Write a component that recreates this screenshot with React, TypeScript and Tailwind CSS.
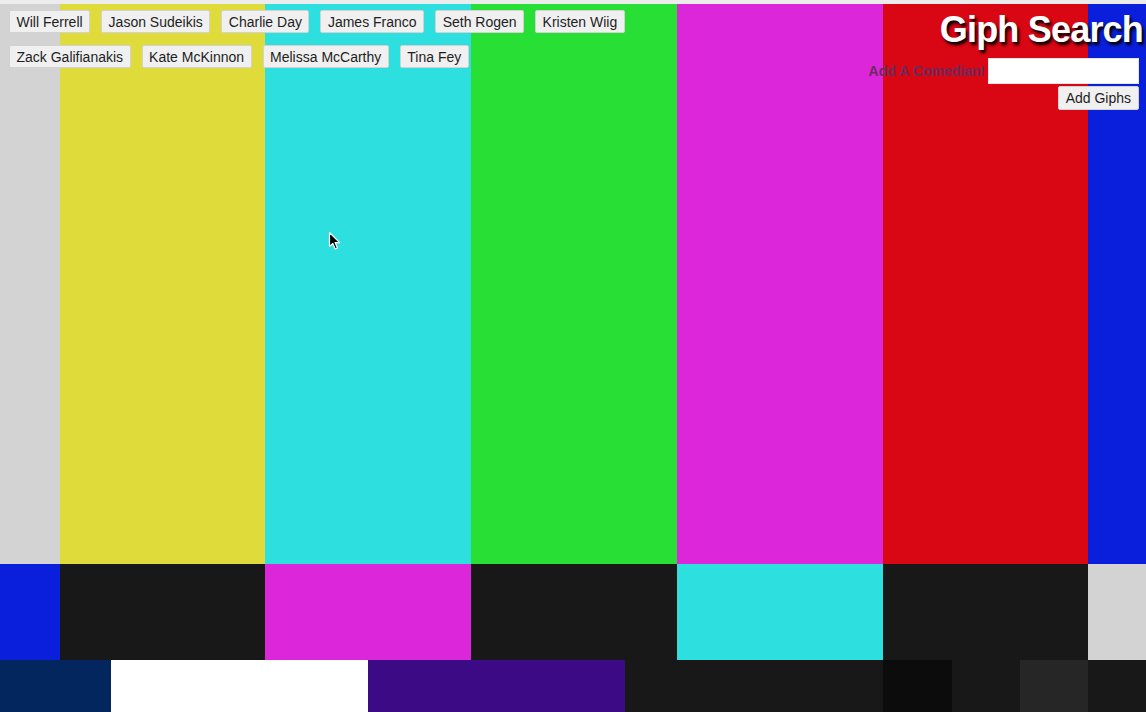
import React from "react";

type Bar = { w: number; c: string };

const topBars: Bar[] = [
  { w: 60, c: "bg-[#d3d3d3]" },
  { w: 205, c: "bg-[#dfdb3a]" },
  { w: 206, c: "bg-[#2ddfdf]" },
  { w: 206, c: "bg-[#28e035]" },
  { w: 206, c: "bg-[#db27d9]" },
  { w: 205, c: "bg-[#d90613]" },
  { w: 58, c: "bg-[#0a1fdc]" },
];

const midBars: Bar[] = [
  { w: 60, c: "bg-[#0a1fdb]" },
  { w: 205, c: "bg-[#181818]" },
  { w: 206, c: "bg-[#db27d9]" },
  { w: 206, c: "bg-[#181818]" },
  { w: 206, c: "bg-[#2ddfdf]" },
  { w: 205, c: "bg-[#181818]" },
  { w: 58, c: "bg-[#d3d3d3]" },
];

const lowBars: Bar[] = [
  { w: 111, c: "bg-[#04265f]" },
  { w: 257, c: "bg-[#ffffff]" },
  { w: 257, c: "bg-[#3d0a86]" },
  { w: 258, c: "bg-[#181818]" },
  { w: 69, c: "bg-[#0c0c0c]" },
  { w: 68, c: "bg-[#181818]" },
  { w: 68, c: "bg-[#262626]" },
  { w: 58, c: "bg-[#181818]" },
];

function BarRow({ bars, h }: { bars: Bar[]; h: string }) {
  return (
    <div className={`flex w-full ${h}`}>
      {bars.map((b, i) => (
        <div key={i} className={`${b.c} shrink-0 h-full`} style={{ width: b.w }} />
      ))}
    </div>
  );
}

function ColorBars() {
  return (
    <div className="absolute inset-0 flex flex-col">
      <div className="h-[4px] bg-[#ececec]" />
      <BarRow bars={topBars} h="h-[560px]" />
      <BarRow bars={midBars} h="h-[96px]" />
      <BarRow bars={lowBars} h="h-[52px]" />
    </div>
  );
}

const rowOne = ["Will Ferrell", "Jason Sudeikis", "Charlie Day", "James Franco", "Seth Rogen", "Kristen Wiig"];
const rowTwo = ["Zack Galifianakis", "Kate McKinnon", "Melissa McCarthy", "Tina Fey"];

function ComedianButton({ name }: { name: string }) {
  return (
    <button className="h-[23px] px-[6.5px] flex items-center bg-[#f0f0f0] border border-[#d2d2d2] rounded-[2px] text-[14px] text-[#1e1e1e] leading-none whitespace-nowrap">
      {name}
    </button>
  );
}

function Cursor() {
  return (
    <svg className="absolute left-[328px] top-[231px]" width="14" height="20" viewBox="0 0 14 20">
      <path
        d="M1.5 1.5 L1.5 15.5 L4.8 12.4 L7.2 18 L9.4 17 L7.1 11.6 L11.6 11.6 Z"
        fill="#000"
        stroke="#fff"
        strokeWidth="1.2"
        strokeLinejoin="round"
      />
    </svg>
  );
}

export default function App() {
  return (
    <div className="relative w-full h-[712px] overflow-hidden font-['Liberation_Sans',Arial,sans-serif]">
      <ColorBars />
      <div className="relative flex justify-between">
        <div className="flex flex-col gap-[12px] pt-[10px] pl-[9px]">
          <div className="flex gap-[11px]">
            {rowOne.map((n) => (
              <ComedianButton key={n} name={n} />
            ))}
          </div>
          <div className="flex gap-[11px]">
            {rowTwo.map((n) => (
              <ComedianButton key={n} name={n} />
            ))}
          </div>
        </div>
        <div className="flex flex-col items-end">
          <h1 className="mt-[12px] mr-[3px] text-[36px] leading-[36px] font-bold tracking-[-0.8px] text-white [text-shadow:2px_3px_3px_#000] whitespace-nowrap">
            Giph Search
          </h1>
          <div className="mt-[10px] mr-[7px] flex items-center gap-[3px]">
            <label className="text-[14px] font-bold text-[#6b2b5f] whitespace-nowrap">Add A Comedian!</label>
            <input className="w-[151px] h-[26px] bg-white border border-[#e6e6e6] outline-none" />
          </div>
          <button className="mt-[2px] mr-[7px] h-[24px] px-[7px] bg-[#f0f0f0] border border-[#d2d2d2] rounded-[2px] text-[14px] text-[#1e1e1e] leading-none whitespace-nowrap">
            Add Giphs
          </button>
        </div>
      </div>
      <Cursor />
    </div>
  );
}
